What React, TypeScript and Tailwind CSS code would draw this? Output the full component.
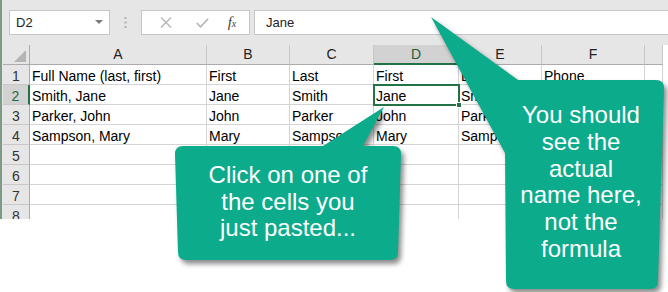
import React from "react";

const cols = [
  { w: "w-[177px]", l: "A" },
  { w: "w-[83px]", l: "B" },
  { w: "w-[84px]", l: "C" },
  { w: "w-[85px]", l: "D" },
  { w: "w-[83px]", l: "E" },
  { w: "w-[103px]", l: "F" },
  { w: "w-[18px]", l: "" },
];

const data: string[][] = [
  ["Full Name (last, first)", "First", "Last", "First", "Last", "Phone", ""],
  ["Smith, Jane", "Jane", "Smith", "Jane", "Smith", "", ""],
  ["Parker, John", "John", "Parker", "John", "Parker", "", ""],
  ["Sampson, Mary", "Mary", "Sampson", "Mary", "Sampson", "", ""],
  ["", "", "", "", "", "", ""],
  ["", "", "", "", "", "", ""],
  ["", "", "", "", "", "", ""],
  ["", "", "", "", "", "", ""],
];

const TEAL = "#0cab8b";

export default function App() {
  return (
    <div className="relative w-[668px] h-[292px] bg-white overflow-hidden font-['Liberation_Sans',Arial,sans-serif] text-black">
      {/* Excel area */}
      <div className="flex h-[219px] bg-[#e6e6e6] overflow-hidden">
        <div className="w-[3px] shrink-0 border-l-2 border-[#7d9a86] bg-[#e6e6e6]" />
        <div className="flex flex-col flex-1 min-w-0">
          <div className="h-[7px] shrink-0" />
          {/* Formula bar row */}
          <div className="flex items-stretch h-[28px] pt-[3px] shrink-0">
            <div className="w-[6px] shrink-0" />
            <div className="w-[101px] shrink-0 bg-white border border-[#c6c6c6] flex items-center justify-between pl-[6px] pr-[6px] text-[13px] text-[#222]">
              <span>D2</span>
              <svg width="8" height="5" viewBox="0 0 8 5">
                <path d="M0 0 L8 0 L4 4 Z" fill="#7a7a7a" />
              </svg>
            </div>
            <div className="w-[31px] shrink-0 flex items-center justify-center">
              <svg width="3" height="11" viewBox="0 0 3 11">
                <rect x="0.5" y="0" width="2" height="2" fill="#b0b0b0" />
                <rect x="0.5" y="4.5" width="2" height="2" fill="#b0b0b0" />
                <rect x="0.5" y="9" width="2" height="2" fill="#b0b0b0" />
              </svg>
            </div>
            <div className="w-[109px] shrink-0 bg-white border border-[#c6c6c6] flex items-center">
              <div className="w-[38px] flex justify-center pl-[10px]">
                <svg width="12" height="11" viewBox="0 0 12 11">
                  <path d="M1 0.5 L11 10.5 M11 0.5 L1 10.5" stroke="#b4b4b4" strokeWidth="1.3" />
                </svg>
              </div>
              <div className="w-[38px] flex justify-center pl-[6px]">
                <svg width="13" height="10" viewBox="0 0 13 10">
                  <path d="M0.8 5 L4.5 8.8 L12.2 0.8" stroke="#b4b4b4" strokeWidth="1.6" fill="none" />
                </svg>
              </div>
              <div className="flex-1 flex justify-center pr-[3px] font-['Liberation_Serif',serif] italic text-[15px] text-[#444] leading-none">
                <span>f</span>
                <span className="text-[10px] mt-[4px]">x</span>
              </div>
            </div>
            <div className="w-[4px] shrink-0" />
            <div className="flex-1 bg-white border border-[#c6c6c6] border-r-0 flex items-center pl-[11px] text-[13px] text-[#222]">
              Jane
            </div>
          </div>
          <div className="h-[10px] shrink-0" />
          {/* Column header */}
          <div className="flex h-[20px] shrink-0">
            <div className="w-[27px] shrink-0 border-r border-b border-[#ababab] relative">
              <svg className="absolute left-[11px] top-[5px]" width="12" height="12" viewBox="0 0 12 12">
                <path d="M12 0 L12 12 L0 12 Z" fill="#b4b4b4" />
              </svg>
            </div>
            {cols.map((c, i) => (
              <div
                key={i}
                className={`${c.w} shrink-0 text-center text-[14px] leading-[19px] ${
                  c.l === "D"
                    ? "bg-[#d2d2d2] text-[#1b5e3a] border-b-2 border-[#217346] border-r border-r-[#bcbcbc]"
                    : "text-[#222] border-b border-[#ababab] border-r border-r-[#c8c8c8]"
                }`}
              >
                {c.l}
              </div>
            ))}
            <div className="flex-1 bg-white" />
          </div>
          {/* Rows */}
          {data.map((row, r) => (
            <div key={r} className="flex h-[20px] shrink-0">
              <div
                className={`w-[27px] shrink-0 text-center text-[14px] pt-[2px] leading-[18px] border-b border-[#c8c8c8] ${
                  r === 1
                    ? "bg-[#d2d2d2] text-[#1e6b45] border-r-2 border-r-[#217346]"
                    : "text-[#333] border-r border-r-[#ababab]"
                }`}
              >
                {r + 1}
              </div>
              {cols.map((c, ci) => (
                <div
                  key={ci}
                  className={`${c.w} shrink-0 relative bg-white border-r border-b border-[#d4d4d4] text-[14px] pl-[2px] pt-[2px] leading-[18px] whitespace-nowrap overflow-hidden`}
                >
                  {row[ci]}
                </div>
              ))}
              <div className="flex-1 bg-white" />
            </div>
          ))}
        </div>
      </div>

      {/* Selected cell D2 overlay */}
      <div className="absolute left-[373px] top-[84px] w-[87px] h-[22px] border-2 border-[#217346]" />
      <div className="absolute left-[456px] top-[102px] w-[6px] h-[6px] bg-[#217346] border border-white" />

      {/* Callouts */}
      <svg
        className="absolute left-0 top-0 pointer-events-none"
        width="668"
        height="292"
        viewBox="0 0 668 292"
        style={{ filter: "drop-shadow(3px 4px 2.5px rgba(0,0,0,0.45))" }}
      >
        <path
          d="M183 146 L323 146 L384 107 L363 146 L393 146 Q401 146 401 154 L398 252 Q398 260 390 260 L186 260 Q178 260 178 252 L175 154 Q175 146 183 146 Z"
          fill={TEAL}
        />
        <path
          d="M431 17 L518 80 L656 80 Q664 80 664 88 L658 281 Q658 289 650 289 L514 289 Q506 289 506 281 L505 153 Z"
          fill={TEAL}
        />
      </svg>

      <div className="absolute left-[188px] top-[162px] w-[200px] text-center text-white text-[24px] leading-[26.6px]">
        Click on one of
        <br />
        the cells you
        <br />
        just pasted...
      </div>
      <div className="absolute left-[501px] top-[102px] w-[160px] text-center text-white text-[24px] leading-[26.8px]">
        You should
        <br />
        see the
        <br />
        actual
        <br />
        name here,
        <br />
        not the
        <br />
        formula
      </div>
    </div>
  );
}
